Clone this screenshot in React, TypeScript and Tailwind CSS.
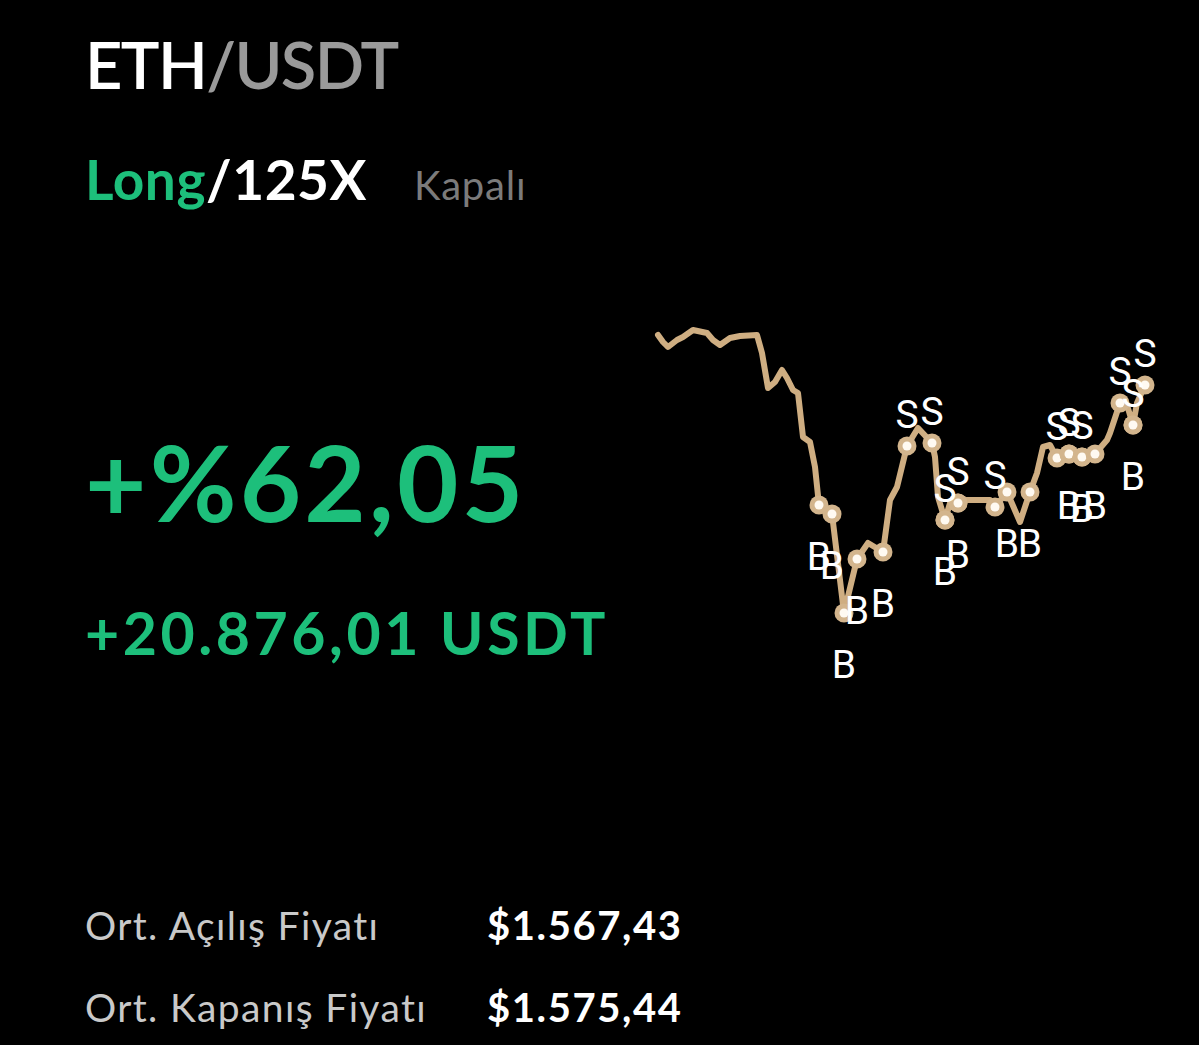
import React from 'react';

type Trade = { x: number; y: number; side: 'B' | 'S' };

const PRICE_PATH =
  'M658,335 L663,342 L668,347 L677,340 L683,337 L693,330 L707,333 L713,340 L720,345 L730,338 L740,336 L757,335 ' +
  'L762,353 L768,388 L775,382 L782,370 L787,378 L793,390 L798,393 L803,437 L810,442 L815,467 L819,505 ' +
  'L832,514 L844,613 L857,559 L868,543 L883,552 L890,500 L897,487 L907,446 L918,428 L932,443 L935,457 ' +
  'L938,497 L945,520 L950,503 L958,503 L962,500 L990,500 L995,507 L1007,492 L1020,522 L1030,492 ' +
  'L1037,473 L1043,447 L1050,445 L1057,458 L1069,454 L1082,457 L1095,454 L1107,440 L1110,433 ' +
  'L1120,403 L1127,405 L1133,425 L1137,403 L1145,385';

const trades: Trade[] = [
  { x: 819, y: 505, side: 'B' },
  { x: 832, y: 514, side: 'B' },
  { x: 844, y: 613, side: 'B' },
  { x: 857, y: 559, side: 'B' },
  { x: 883, y: 552, side: 'B' },
  { x: 907, y: 446, side: 'S' },
  { x: 932, y: 443, side: 'S' },
  { x: 945, y: 520, side: 'S' },
  { x: 945, y: 520, side: 'B' },
  { x: 958, y: 503, side: 'S' },
  { x: 958, y: 503, side: 'B' },
  { x: 995, y: 507, side: 'S' },
  { x: 1007, y: 492, side: 'B' },
  { x: 1030, y: 492, side: 'B' },
  { x: 1057, y: 458, side: 'S' },
  { x: 1069, y: 454, side: 'S' },
  { x: 1069, y: 454, side: 'B' },
  { x: 1082, y: 457, side: 'S' },
  { x: 1082, y: 457, side: 'B' },
  { x: 1095, y: 454, side: 'B' },
  { x: 1120, y: 403, side: 'S' },
  { x: 1133, y: 425, side: 'S' },
  { x: 1133, y: 425, side: 'B' },
  { x: 1145, y: 385, side: 'S' },
];

const TradeChart = () => (
  <svg width={549} height={370} viewBox="650 320 549 370" className="shrink-0 overflow-visible">
    <path
      d={PRICE_PATH}
      fill="none"
      stroke="#cfae82"
      strokeWidth={6}
      strokeLinejoin="round"
      strokeLinecap="round"
    />
    {trades.map((t, i) => (
      <g key={`m${i}`}>
        <circle cx={t.x} cy={t.y} r={9.5} fill="#d3b58d" />
        <circle cx={t.x} cy={t.y} r={4.5} fill="#fffaf2" />
      </g>
    ))}
    {trades.map((t, i) => (
      <text
        key={`l${i}`}
        x={t.x}
        y={t.side === 'B' ? t.y + 65 : t.y - 18}
        textAnchor="middle"
        fill="#ffffff"
        fontSize={39}
        fontFamily="Roboto, sans-serif"
      >
        {t.side}
      </text>
    ))}
  </svg>
);

const PriceRow = ({ label, value }: { label: string; value: string }) => (
  <div className="flex items-baseline">
    <span className="w-[402px] text-[39px] leading-none tracking-[0.035em] text-[#c9c9c9]">{label}</span>
    <span className="text-[40px] leading-none font-bold tracking-[0.04em] text-white">{value}</span>
  </div>
);

export default function App() {
  return (
    <div className="min-h-screen w-full bg-black pt-[32px] pl-[85px] font-['Lato',sans-serif] overflow-hidden">
      <h1 className="text-[65px] leading-none font-semibold tracking-tight">
        <span className="text-white">ETH</span>
        <span className="text-[#9a9a9a]">/USDT</span>
      </h1>

      <div className="mt-[55px] flex items-baseline">
        <span className="text-[55px] leading-none font-bold tracking-[0.01em]">
          <span className="text-[#1dbf7b]">Long</span>
          <span className="text-white">/125X</span>
        </span>
        <span className="ml-[47px] text-[40px] leading-none tracking-[0.02em] text-[#7b7b7b]">Kapalı</span>
      </div>

      <div className="mt-[113px] flex">
        <div className="w-[565px] shrink-0 pt-[108px] text-[#1dbf7b]">
          <div className="text-[106px] leading-none font-bold tracking-[0.03em]">+%62,05</div>
          <div className="mt-[69px] text-[59px] leading-none font-bold tracking-[0.06em]">+20.876,01 USDT</div>
        </div>
        <TradeChart />
      </div>

      <div className="mt-[215px] flex flex-col gap-[42px]">
        <PriceRow label="Ort. Açılış Fiyatı" value="$1.567,43" />
        <PriceRow label="Ort. Kapanış Fiyatı" value="$1.575,44" />
      </div>
    </div>
  );
}
